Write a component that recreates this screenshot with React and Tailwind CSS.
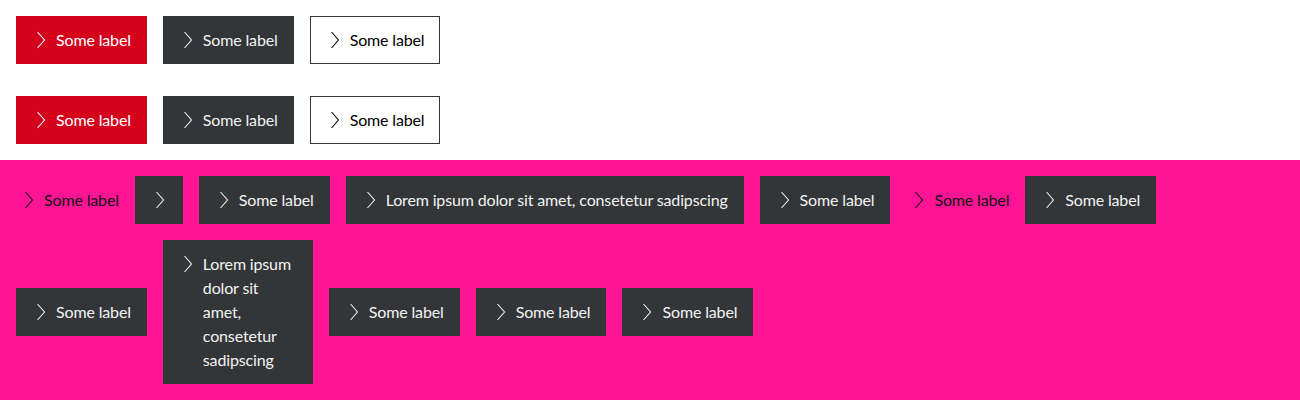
import React from "react";

const Chevron = ({ className = "" }) => (
  <svg viewBox="0 0 24 24" width="24" height="24" className={"shrink-0 " + className} fill="none">
    <path d="M9.5 4l7 8-7 8" stroke="currentColor" strokeWidth="1.1" />
  </svg>
);

const Btn = ({ variant = "dark", children, className = "" }) => {
  const v = {
    red: "bg-[#d5001c] border-[#d5001c] text-white",
    dark: "bg-[#323639] border-[#323639] text-[#f2f2f2]",
    outline: "bg-white border-[#323639] text-[#000000]",
  }[variant];
  return (
    <button
      className={
        "flex items-start border pl-[11px] pr-[15px] py-[11px] text-[16px] leading-[24px] tracking-[-0.15px] text-left " +
        v +
        " " +
        className
      }
    >
      <Chevron />
      <span className="pl-[4px]">{children}</span>
    </button>
  );
};

const IconBtn = () => (
  <button className="flex items-center justify-center w-[48px] h-[48px] bg-[#323639] text-[#f2f2f2]">
    <Chevron />
  </button>
);

const TextBtn = ({ children }) => (
  <button className="flex items-center text-[16px] leading-[24px] tracking-[-0.15px] text-[#0e1418] py-[12px]">
    <Chevron />
    <span className="pl-[4px]">{children}</span>
  </button>
);

export default function App() {
  return (
    <div className="w-[1300px] bg-white" style={{ fontFamily: "Lato, 'Noto Sans', sans-serif" }}>
      <div className="p-4 flex gap-4">
        <Btn variant="red">Some label</Btn>
        <Btn variant="dark">Some label</Btn>
        <Btn variant="outline">Some label</Btn>
      </div>
      <div className="p-4 flex gap-4">
        <Btn variant="red">Some label</Btn>
        <Btn variant="dark">Some label</Btn>
        <Btn variant="outline">Some label</Btn>
      </div>
      <div className="bg-[#ff1493] p-4 flex flex-wrap items-center gap-4">
        <TextBtn>Some label</TextBtn>
        <IconBtn />
        <Btn>Some label</Btn>
        <Btn>Lorem ipsum dolor sit amet, consetetur sadipscing</Btn>
        <Btn>Some label</Btn>
        <TextBtn>Some label</TextBtn>
        <Btn>Some label</Btn>
        <Btn>Some label</Btn>
        <Btn className="w-[150px]">Lorem ipsum dolor sit amet, consetetur sadipscing</Btn>
        <Btn>Some label</Btn>
        <Btn>Some label</Btn>
        <Btn>Some label</Btn>
      </div>
    </div>
  );
}
